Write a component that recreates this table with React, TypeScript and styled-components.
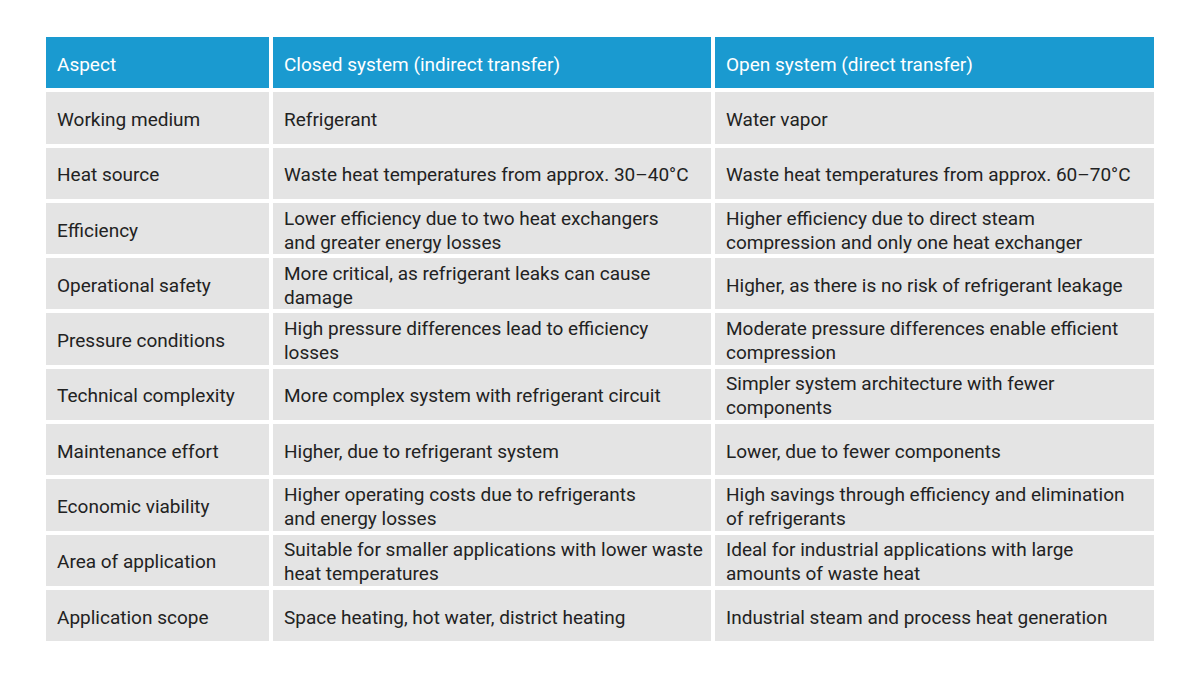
import React from "react";
import styled, { createGlobalStyle } from "styled-components";

const GlobalStyle = createGlobalStyle`
  html, body {
    margin: 0;
    padding: 0;
    background: #ffffff;
  }
  body {
    font-family: Roboto, "Liberation Sans", Arial, sans-serif;
  }
`;

const Page = styled.div`
  width: 1200px;
  height: 680px;
  padding: 37px 0 0 46px;
  box-sizing: border-box;
`;

const Grid = styled.div`
  display: grid;
  grid-template-columns: 223px 438px 439px;
  grid-auto-rows: 51.3px;
  column-gap: 4px;
  row-gap: 4px;
  width: 1108px;
`;

const Cell = styled.div<{ $head?: boolean }>`
  display: flex;
  align-items: center;
  padding: 4px 0 0 11px;
  background: ${(p) => (p.$head ? "#1a9ad0" : "#e4e4e4")};
  color: ${(p) => (p.$head ? "#ffffff" : "#222222")};
  font-size: 19px;
  line-height: 24px;
  white-space: pre;
`;

const header = ["Aspect", "Closed system (indirect transfer)", "Open system (direct transfer)"];

const rows: string[][] = [
  ["Working medium", "Refrigerant", "Water vapor"],
  [
    "Heat source",
    "Waste heat temperatures from approx. 30–40°C",
    "Waste heat temperatures from approx. 60–70°C",
  ],
  [
    "Efficiency",
    "Lower efficiency due to two heat exchangers\nand greater energy losses",
    "Higher efficiency due to direct steam\ncompression and only one heat exchanger",
  ],
  [
    "Operational safety",
    "More critical, as refrigerant leaks can cause\ndamage",
    "Higher, as there is no risk of refrigerant leakage",
  ],
  [
    "Pressure conditions",
    "High pressure differences lead to efficiency\nlosses",
    "Moderate pressure differences enable efficient\ncompression",
  ],
  [
    "Technical complexity",
    "More complex system with refrigerant circuit",
    "Simpler system architecture with fewer\ncomponents",
  ],
  ["Maintenance effort", "Higher, due to refrigerant system", "Lower, due to fewer components"],
  [
    "Economic viability",
    "Higher operating costs due to refrigerants\nand energy losses",
    "High savings through efficiency and elimination\nof refrigerants",
  ],
  [
    "Area of application",
    "Suitable for smaller applications with lower waste\nheat temperatures",
    "Ideal for industrial applications with large\namounts of waste heat",
  ],
  [
    "Application scope",
    "Space heating, hot water, district heating",
    "Industrial steam and process heat generation",
  ],
];

export default function App() {
  return (
    <Page>
      <GlobalStyle />
      <Grid>
        {header.map((h) => (
          <Cell key={h} $head>
            {h}
          </Cell>
        ))}
        {rows.map((r) =>
          r.map((c, i) => <Cell key={r[0] + i}>{c}</Cell>)
        )}
      </Grid>
    </Page>
  );
}
